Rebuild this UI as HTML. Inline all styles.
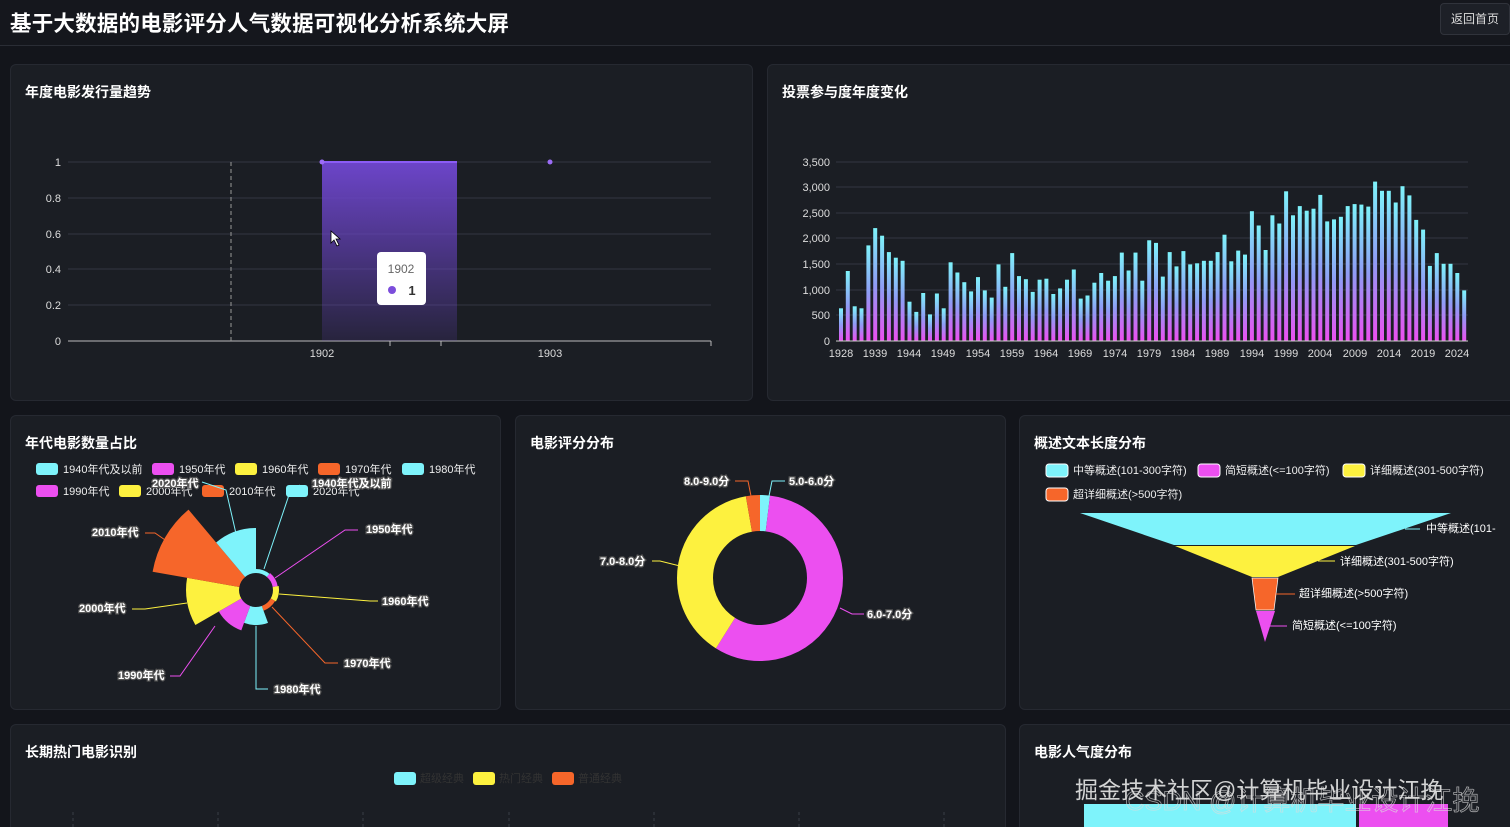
<!DOCTYPE html>
<html><head><meta charset="utf-8">
<style>
*{margin:0;padding:0;box-sizing:border-box}
html,body{width:1510px;height:827px;overflow:hidden}
body{background:#13151b;font-family:"Liberation Sans","Noto Sans CJK SC",sans-serif;color:#fff;position:relative}
.hdr{position:absolute;left:0;top:0;width:1510px;height:46px;background:#15171d;border-bottom:1px solid #2a2d35}
.hdr h1{position:absolute;left:10px;top:7px;font-size:21.5px;font-weight:bold;letter-spacing:0.2px}
.btn{position:absolute;right:0;top:3px;width:70px;height:32px;border:1px solid #30333b;border-radius:4px;background:#1d2027;font-size:12px;line-height:30px;text-align:center;color:#ddd}
.p{position:absolute;background:#1b1e24;border:1px solid #262931;border-radius:6px}
.t{position:absolute;left:14px;top:17px;font-size:14px;font-weight:bold}
svg{position:absolute;left:0;top:0}
</style></head><body>
<div class="hdr"><h1>基于大数据的电影评分人气数据可视化分析系统大屏</h1><div class="btn">返回首页</div></div>

<div class="p" style="left:10px;top:64px;width:743px;height:337px"><div class="t">年度电影发行量趋势</div></div>
<div class="p" style="left:767px;top:64px;width:750px;height:337px"><div class="t">投票参与度年度变化</div></div>
<div class="p" style="left:10px;top:415px;width:491px;height:295px"><div class="t">年代电影数量占比</div></div>
<div class="p" style="left:515px;top:415px;width:491px;height:295px"><div class="t">电影评分分布</div></div>
<div class="p" style="left:1019px;top:415px;width:500px;height:295px"><div class="t">概述文本长度分布</div></div>
<div class="p" style="left:10px;top:724px;width:996px;height:110px"><div class="t">长期热门电影识别</div></div>
<div class="p" style="left:1019px;top:724px;width:500px;height:110px"><div class="t">电影人气度分布</div></div>

<svg width="1510" height="827" font-family="Liberation Sans, Noto Sans CJK SC, sans-serif">
<defs>
<linearGradient id="g1" x1="0" y1="0" x2="0" y2="1"><stop offset="0" stop-color="#6c45c9"/><stop offset="1" stop-color="#6c45c9" stop-opacity="0.15"/></linearGradient>
<linearGradient id="g2" x1="0" y1="0" x2="0" y2="1"><stop offset="0" stop-color="#7ef3fb"/><stop offset="0.5" stop-color="#8f9cf5"/><stop offset="1" stop-color="#ec4ff0"/></linearGradient>
</defs>
<g stroke="#333742" stroke-width="1">
<line x1="68" y1="162" x2="711" y2="162"/><line x1="68" y1="198" x2="711" y2="198"/><line x1="68" y1="234" x2="711" y2="234"/><line x1="68" y1="269" x2="711" y2="269"/><line x1="68" y1="305" x2="711" y2="305"/>
</g>
<line x1="68" y1="341" x2="711" y2="341" stroke="#bbb"/>
<g stroke="#bbb"><line x1="390" y1="341" x2="390" y2="346"/><line x1="441" y1="341" x2="441" y2="346"/><line x1="711" y1="341" x2="711" y2="346"/></g>
<line x1="231" y1="162" x2="231" y2="341" stroke="#999" stroke-dasharray="4,3"/>
<rect x="322" y="162" width="135" height="179" fill="url(#g1)"/>
<line x1="322" y1="162" x2="457" y2="162" stroke="#8b5cf6" stroke-width="2"/>
<circle cx="322" cy="162" r="2.5" fill="#9b6cf6"/><circle cx="550" cy="162" r="2.5" fill="#9b6cf6"/>
<g fill="#ddd" font-size="11" text-anchor="end"><text x="61" y="166">1</text><text x="61" y="202">0.8</text><text x="61" y="238">0.6</text><text x="61" y="273">0.4</text><text x="61" y="309">0.2</text><text x="61" y="345">0</text></g>
<g fill="#ddd" font-size="11" text-anchor="middle"><text x="322" y="357">1902</text><text x="550" y="357">1903</text></g>
<rect x="377" y="252" width="49" height="53" rx="4" fill="#fff"/>
<text x="401" y="273" font-size="12" fill="#666" text-anchor="middle">1902</text>
<circle cx="392" cy="290" r="4" fill="#7c4ddb"/><text x="412" y="295" font-size="13" font-weight="bold" fill="#333" text-anchor="middle">1</text>
<path d="M331 231 l0 12 l3 -3 l3 6 l2 -1 l-3 -6 l4 0 z" fill="#fff" stroke="#000" stroke-width="0.8"/>
<g stroke="#333742"><line x1="836" y1="162" x2="1468" y2="162"/><line x1="836" y1="187" x2="1468" y2="187"/><line x1="836" y1="213" x2="1468" y2="213"/><line x1="836" y1="238" x2="1468" y2="238"/><line x1="836" y1="264" x2="1468" y2="264"/><line x1="836" y1="290" x2="1468" y2="290"/><line x1="836" y1="315" x2="1468" y2="315"/></g>
<g id="bars"></g>
<line x1="836" y1="341" x2="1468" y2="341" stroke="#ccc"/>
<g fill="#ddd" font-size="11" text-anchor="end"><text x="830" y="166">3,500</text><text x="830" y="191">3,000</text><text x="830" y="217">2,500</text><text x="830" y="242">2,000</text><text x="830" y="268">1,500</text><text x="830" y="294">1,000</text><text x="830" y="319">500</text><text x="830" y="345">0</text></g>
<g fill="#ddd" font-size="11" text-anchor="middle"><text x="841" y="357">1928</text><text x="875" y="357">1939</text><text x="909" y="357">1944</text><text x="943" y="357">1949</text><text x="978" y="357">1954</text><text x="1012" y="357">1959</text><text x="1046" y="357">1964</text><text x="1080" y="357">1969</text><text x="1115" y="357">1974</text><text x="1149" y="357">1979</text><text x="1183" y="357">1984</text><text x="1217" y="357">1989</text><text x="1252" y="357">1994</text><text x="1286" y="357">1999</text><text x="1320" y="357">2004</text><text x="1355" y="357">2009</text><text x="1389" y="357">2014</text><text x="1423" y="357">2019</text><text x="1457" y="357">2024</text></g>
<g font-size="11" fill="#eee">
<rect x="36" y="463" width="22" height="12" rx="3" fill="#7ef3fb"/><text x="63" y="473">1940年代及以前</text>
<rect x="152" y="463" width="22" height="12" rx="3" fill="#ec4ff0"/><text x="179" y="473">1950年代</text>
<rect x="235" y="463" width="22" height="12" rx="3" fill="#fdf13f"/><text x="262" y="473">1960年代</text>
<rect x="318" y="463" width="22" height="12" rx="3" fill="#f6662a"/><text x="345" y="473">1970年代</text>
<rect x="402" y="463" width="22" height="12" rx="3" fill="#7ef3fb"/><text x="429" y="473">1980年代</text>
<rect x="36" y="485" width="22" height="12" rx="3" fill="#ec4ff0"/><text x="63" y="495">1990年代</text>
<rect x="119" y="485" width="22" height="12" rx="3" fill="#fdf13f"/><text x="146" y="495">2000年代</text>
<rect x="202" y="485" width="22" height="12" rx="3" fill="#f6662a"/><text x="229" y="495">2010年代</text>
<rect x="286" y="485" width="22" height="12" rx="3" fill="#7ef3fb"/><text x="313" y="495">2020年代</text>
</g>
<path d="M256 573 L256 569 A21 21 0 0 1 269.5 573.9 L266.9 577 A17 17 0 0 0 256 573Z" fill="#7ef3fb"/>
<path d="M266.9 577 L270.1 573.1 A22 22 0 0 1 277.7 586.2 L272.7 587 A17 17 0 0 0 266.9 577Z" fill="#ec4ff0"/>
<path d="M272.7 587 L278.7 586 A23 23 0 0 1 275.9 601.5 L270.7 598.5 A17 17 0 0 0 272.7 587Z" fill="#fdf13f"/>
<path d="M270.7 598.5 L275.1 601 A22 22 0 0 1 263.5 610.7 L261.8 606 A17 17 0 0 0 270.7 598.5Z" fill="#f6662a"/>
<path d="M261.8 606 L268 622.9 A35 35 0 0 1 244 622.9 L250.2 606 A17 17 0 0 0 261.8 606Z" fill="#7ef3fb"/>
<path d="M250.2 606 L241.3 630.4 A43 43 0 0 1 218.8 611.5 L241.3 598.5 A17 17 0 0 0 250.2 606Z" fill="#ec4ff0"/>
<path d="M241.3 598.5 L195.4 625 A70 70 0 0 1 187.1 577.8 L239.3 587 A17 17 0 0 0 241.3 598.5Z" fill="#fdf13f"/>
<path d="M239.3 587 L152.6 571.7 A105 105 0 0 1 188.5 509.6 L245.1 577 A17 17 0 0 0 239.3 587Z" fill="#f6662a"/>
<path d="M245.1 577 L216.1 542.5 A62 62 0 0 1 256 528 L256 573 A17 17 0 0 0 245.1 577Z" fill="#7ef3fb"/>
<g fill="none" stroke-width="1">
<polyline points="237,538 226,490 202,482" stroke="#7ef3fb"/>
<polyline points="264,569 290,492 300,485" stroke="#7ef3fb"/>
<polyline points="275,578 345,530 358,530" stroke="#ec4ff0"/>
<polyline points="279,594 370,601 378,601" stroke="#fdf13f"/>
<polyline points="272,607 325,663 338,663" stroke="#f6662a"/>
<polyline points="256,626 256,689 268,689" stroke="#7ef3fb"/>
<polyline points="215,626 180,676 170,676" stroke="#ec4ff0"/>
<polyline points="187,603 145,609 132,609" stroke="#fdf13f"/>
<polyline points="168,542 155,533 145,533" stroke="#f6662a"/>
</g>
<g font-size="11" fill="#fff" stroke="#555" stroke-width="2.5" paint-order="stroke" font-weight="bold">
<text x="152" y="487">2020年代</text><text x="312" y="487">1940年代及以前</text><text x="366" y="533">1950年代</text><text x="382" y="605">1960年代</text><text x="344" y="667">1970年代</text><text x="274" y="693">1980年代</text><text x="118" y="679">1990年代</text><text x="79" y="612">2000年代</text><text x="92" y="536">2010年代</text>
</g>
<g transform="rotate(-90 760 578)" fill="none" stroke-width="36">
<circle cx="760" cy="578" r="65" stroke="#7ef3fb" stroke-dasharray="7.9 500"/>
<circle cx="760" cy="578" r="65" stroke="#ec4ff0" stroke-dasharray="0 7.9 232.6 500"/>
<circle cx="760" cy="578" r="65" stroke="#fdf13f" stroke-dasharray="0 240.5 156.6 500"/>
<circle cx="760" cy="578" r="65" stroke="#f6662a" stroke-dasharray="0 397.1 11.3 500"/>
</g>
<g fill="none" stroke-width="1">
<polyline points="769,496 772,481 785,481" stroke="#7ef3fb"/>
<polyline points="751,496 748,481 735,481" stroke="#f6662a"/>
<polyline points="680,566 660,561 652,561" stroke="#fdf13f"/>
<polyline points="840,608 852,614 864,614" stroke="#ec4ff0"/>
</g>
<g font-size="11" fill="#fff" stroke="#555" stroke-width="2.5" paint-order="stroke" font-weight="bold">
<text x="789" y="485">5.0-6.0分</text><text x="684" y="485">8.0-9.0分</text><text x="600" y="565">7.0-8.0分</text><text x="867" y="618">6.0-7.0分</text>
</g>
<g font-size="11" fill="#eee">
<rect x="1046" y="464" width="22" height="13" rx="3" fill="#7ef3fb" stroke="#fff"/><text x="1073" y="474">中等概述(101-300字符)</text>
<rect x="1198" y="464" width="22" height="13" rx="3" fill="#ec4ff0" stroke="#fff"/><text x="1225" y="474">简短概述(&lt;=100字符)</text>
<rect x="1343" y="464" width="22" height="13" rx="3" fill="#fdf13f" stroke="#fff"/><text x="1370" y="474">详细概述(301-500字符)</text>
<rect x="1046" y="488" width="22" height="13" rx="3" fill="#f6662a" stroke="#fff"/><text x="1073" y="498">超详细概述(&gt;500字符)</text>
</g>
<polygon points="1080,513 1451,513 1356,545 1174,545" fill="#7ef3fb"/>
<polygon points="1175,546 1355,546 1278,577 1252,577" fill="#fdf13f"/>
<polygon points="1252,578 1278,578 1274,610 1256,610" fill="#f6662a" stroke="#fff" stroke-width="0.7"/>
<polygon points="1256,611 1275,611 1265,642" fill="#ec4ff0"/>
<g stroke-width="1"><line x1="1405" y1="529" x2="1420" y2="529" stroke="#7ef3fb"/><line x1="1318" y1="561" x2="1335" y2="561" stroke="#fdf13f"/><line x1="1276" y1="594" x2="1295" y2="594" stroke="#f6662a"/><line x1="1270" y1="626" x2="1287" y2="626" stroke="#ec4ff0"/></g>
<g font-size="11" fill="#fff"><text x="1426" y="532">中等概述(101-</text><text x="1340" y="565">详细概述(301-500字符)</text><text x="1299" y="597">超详细概述(&gt;500字符)</text><text x="1292" y="629">简短概述(&lt;=100字符)</text></g>
<g font-size="11" fill="#333">
<rect x="394" y="772" width="22" height="13" rx="3" fill="#7ef3fb"/><text x="420" y="782">超级经典</text>
<rect x="473" y="772" width="22" height="13" rx="3" fill="#fdf13f"/><text x="499" y="782">热门经典</text>
<rect x="552" y="772" width="22" height="13" rx="3" fill="#f6662a"/><text x="578" y="782">普通经典</text>
</g>
<g stroke="#3a3d46" stroke-dasharray="3,3"><line x1="73" y1="812" x2="73" y2="827"/><line x1="218" y1="812" x2="218" y2="827"/><line x1="363" y1="812" x2="363" y2="827"/><line x1="509" y1="812" x2="509" y2="827"/><line x1="654" y1="812" x2="654" y2="827"/><line x1="799" y1="812" x2="799" y2="827"/><line x1="944" y1="812" x2="944" y2="827"/></g>
<rect x="1084" y="804" width="272" height="23" fill="#7ef3fb"/>
<rect x="1359" y="804" width="89" height="23" fill="#ec4ff0"/>
<text x="1075" y="798" font-size="23" fill="#e8e8e8" opacity="0.9">掘金技术社区@计算机毕业设计江挽</text>
<text x="1125" y="810" font-size="27" fill="none" stroke="#ddd" stroke-width="0.8" opacity="0.7">CSDN @计算机毕业设计江挽</text>
</svg>
<script>
var v=[640,1370,680,640,1870,2210,2060,1740,1630,1570,770,570,940,520,930,640,1540,1340,1150,970,1250,990,850,1500,1060,1720,1270,1210,960,1200,1220,920,1030,1200,1400,830,890,1140,1330,1180,1270,1730,1380,1730,1180,1970,1920,1260,1740,1460,1760,1500,1520,1570,1570,1740,2080,1560,1770,1690,2540,2260,1780,2460,2300,2930,2460,2640,2550,2590,2860,2340,2380,2430,2640,2680,2670,2630,3120,2940,2940,2710,3030,2850,2370,2180,1470,1720,1510,1510,1330,990];
var s='',step=(1468-838)/v.length;
for(var i=0;i<v.length;i++){var h=v[i]*0.0511;s+='<rect x="'+(839+i*step).toFixed(1)+'" y="'+(341-h).toFixed(1)+'" width="4" height="'+h.toFixed(1)+'" fill="url(#g2)"/>';}
document.getElementById('bars').innerHTML=s;
</script>
</body></html>
